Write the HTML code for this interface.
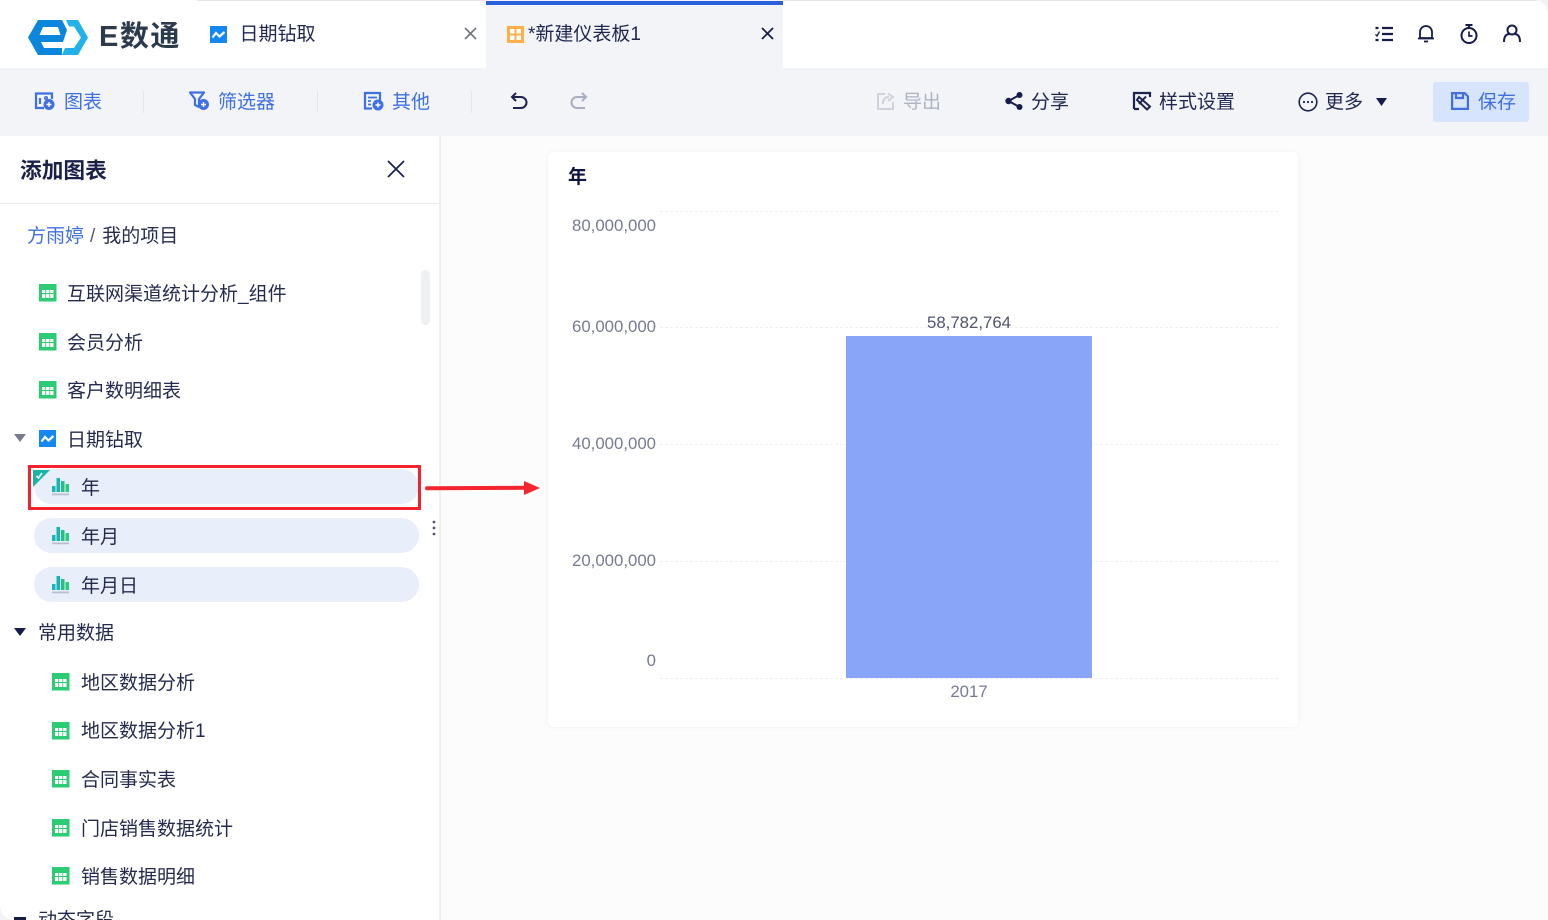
<!DOCTYPE html>
<html lang="zh"><head><meta charset="utf-8"><title>E数通</title>
<style>
html,body{margin:0;padding:0;width:1548px;height:920px;overflow:hidden;background:#f3f3f5}
body{font-family:"Liberation Sans","Noto Sans CJK SC",sans-serif;font-size:19px;color:#252b4e;position:relative}
.a{position:absolute}
.t{position:absolute;white-space:nowrap;line-height:26px;height:26px;margin-top:2px}
svg{position:absolute;overflow:visible}
.blue{color:#3f6fe3}
.pill{position:absolute;left:34px;width:385px;height:35px;border-radius:18px;background:#e8eefa}
.ax{position:absolute;white-space:nowrap;font-size:16.8px;line-height:20px;color:#777b92;text-align:right;width:100px;left:556px;margin-top:1px}
.grid{position:absolute;left:660px;width:618px;height:0;border-top:1px dashed #f0f0f3}
.div{position:absolute;top:91px;width:1px;height:22px;background:#e3e5ea}
</style></head><body>
<svg width="0" height="0" style="position:absolute"><defs>
<g id="tb"><rect x="0" y="0" width="17.500" height="17.500" fill="#2ecb75"/><g fill="#fff"><rect x="3" y="6" width="3.300" height="3"/><rect x="7.100" y="6" width="3.300" height="3"/><rect x="11.200" y="6" width="3.300" height="3"/><rect x="3" y="10" width="3.300" height="4"/><rect x="7.100" y="10" width="3.300" height="4"/><rect x="11.200" y="10" width="3.300" height="4"/></g></g>
<g id="ln"><rect width="17" height="17" fill="#1487f2"/><path d="M2.500 11.500l3.500-4.500 3.500 3.500 5-4.500" fill="none" stroke="#fff" stroke-width="2.200"/></g>
<g id="br"><rect x="0" y="8" width="3.500" height="6" fill="#18b5c0"/><rect x="4.500" y="0" width="3.500" height="14" fill="#18b5b0"/><rect x="9" y="3" width="3.500" height="11" fill="#22c08a"/><rect x="13.500" y="6" width="3.500" height="8" fill="#2ecb75"/><rect x="0" y="15.500" width="17" height="1.800" fill="#b9bfd2"/></g>
</defs></svg>

<!-- top bar -->
<div class="a" style="left:0;top:0;width:1548px;height:68px;background:#fff;border-radius:0 14px 0 0"></div>
<div class="a" style="left:197px;top:0;width:1340px;height:1px;background:#e6e7ea"></div>
<svg style="left:0;top:0" width="100" height="60">
<path fill-rule="evenodd" d="M38 20H62L67 30 63 42H41L44 48H62V55H38L28 37.500ZM43 27L39.500 35H60.500L58 27Z" fill="#0a86dc"/>
<path d="M66 20H78L88 37.500 78 55H62L65 48H74L81 37.500 74 26.500H69Z" fill="#22b2ea"/>
</svg>
<div class="t" style="left:99px;top:19px;height:36px;line-height:36px;font-size:29px;font-weight:700;color:#2c3a4e;letter-spacing:1.500px;margin-top:0">E数通</div>

<svg style="left:210px;top:26px" width="17" height="17"><use href="#ln"/></svg>
<div class="t" style="left:239.500px;top:20px;color:#1f2650">日期钻取</div>
<svg style="left:464px;top:27px" width="13" height="13"><path d="M1 1l11 11M12 1L1 12" stroke="#70747f" stroke-width="1.600"/></svg>

<div class="a" style="left:486px;top:0;width:297px;height:68px;background:#f2f4f8"></div>
<div class="a" style="left:486px;top:1px;width:297px;height:4px;background:#2a60de"></div>
<svg style="left:507px;top:26px" width="17" height="17"><rect width="17" height="17" fill="#fdb04a"/><rect x="3" y="3" width="4.500" height="11" fill="#fff"/><rect x="9.500" y="3" width="4.500" height="11" fill="#fff"/><rect x="3" y="7.500" width="11" height="2" fill="#fdb04a"/></svg>
<div class="t" style="left:528px;top:20px;color:#1f2650">*新建仪表板1</div>
<svg style="left:761px;top:27px" width="13" height="13"><path d="M1 1l11 11M12 1L1 12" stroke="#1a2048" stroke-width="1.800"/></svg>

<!-- right icons -->
<svg style="left:1375px;top:26px" width="18" height="17" fill="none" stroke="#161c48" stroke-width="2.200"><path d="M7 2h11M7 8h11M7 14h11"/><path d="M0.500 2h3M0.500 14h3"/><path d="M0.500 8.500l1.500 1.500L4.500 5.500" stroke-width="1.300"/></svg>
<svg style="left:1417px;top:24px" width="18" height="19" fill="none" stroke="#161c48" stroke-width="1.800"><path d="M3 14V8a6 6 0 0 1 12 0v6zM1 14.500h16"/><path d="M7 17.500h4"/></svg>
<svg style="left:1460px;top:24px" width="18" height="20" fill="none" stroke="#161c48" stroke-width="2"><circle cx="9" cy="11.500" r="7.500"/><path d="M5.500 1h7M9 1v3"/><path d="M9 7.500v4.500h3.500" stroke-width="1.700"/></svg>
<svg style="left:1503px;top:24px" width="18" height="18" fill="none" stroke="#161c48" stroke-width="2"><circle cx="9" cy="6" r="4.500"/><path d="M1 18q0-7.500 5-8M17 18q0-7.500-5-8"/></svg>

<!-- toolbar -->
<div class="a" style="left:0;top:68px;width:1548px;height:68px;background:#f2f4f8;box-shadow:0 1px 3px rgba(0,0,0,.05)"></div>
<svg style="left:35px;top:92px" width="20" height="18" fill="none" stroke="#3f6fe3" stroke-width="2.200"><path d="M9 16H1V1.500h16V7"/><path d="M5 6v6"/><circle cx="11" cy="6" r="1.300" stroke-width="1.500"/><circle cx="14" cy="12.500" r="5.500" fill="#3f6fe3" stroke="none"/><path d="M11.500 12.500h5M14 10v5" stroke="#fff" stroke-width="1.400"/></svg>
<div class="t blue" style="left:64px;top:88px">图表</div>
<div class="div" style="left:143px"></div>
<svg style="left:189px;top:91px" width="21" height="20" fill="none" stroke="#3f6fe3" stroke-width="2.200"><path d="M1 1.500h14L10 8v8L6 14V8z" stroke-linejoin="round"/><circle cx="14.500" cy="13.500" r="5.500" fill="#3f6fe3" stroke="none"/><path d="M12 13.500h5M14.500 11v5" stroke="#fff" stroke-width="1.400"/></svg>
<div class="t blue" style="left:218px;top:88px">筛选器</div>
<div class="div" style="left:317px"></div>
<svg style="left:364px;top:92px" width="20" height="18" fill="none" stroke="#3f6fe3" stroke-width="2.200"><path d="M8 16.500H1V1h15v7"/><path d="M4 5.500h9M4 9h3M4 12.500h3" stroke-width="1.800"/><circle cx="14" cy="13" r="5.500" fill="#3f6fe3" stroke="none"/><path d="M11.500 13h5M14 10.500v5" stroke="#fff" stroke-width="1.400"/></svg>
<div class="t blue" style="left:392px;top:88px">其他</div>
<div class="div" style="left:471px"></div>
<svg style="left:510px;top:92px" width="18" height="18" fill="none" stroke="#1d2450" stroke-width="2"><path d="M6 1L2 5l4 4"/><path d="M2 5h9a5.500 5.500 0 0 1 0 11H3"/></svg>
<svg style="left:570px;top:92px" width="18" height="18" fill="none" stroke="#a8adc0" stroke-width="2"><path d="M12 1l4 4-4 4"/><path d="M16 5H7a5.500 5.500 0 0 0 0 11h8"/></svg>

<svg style="left:877px;top:92px" width="18" height="18" fill="none" stroke="#cfd2dd" stroke-width="2"><path d="M8 2H1v15h15v-7"/><path d="M6 12q0-7 6-7M11 1.500L16 5l-5 4"/></svg>
<div class="t" style="left:903px;top:88px;color:#aeb2c2">导出</div>

<svg style="left:1005px;top:92px" width="18" height="18" fill="#161c48" stroke="#161c48"><circle cx="3.500" cy="9" r="3.200" stroke="none"/><circle cx="14.500" cy="3" r="3" stroke="none"/><circle cx="14.500" cy="15" r="3" stroke="none"/><path d="M3.500 9l11-6M3.500 9l11 6" stroke-width="2"/></svg>
<div class="t" style="left:1031px;top:88px;color:#1f2650">分享</div>
<svg style="left:1133px;top:92px" width="18" height="18" fill="none" stroke="#1d2450" stroke-width="2.200"><path d="M1 17V1h16v4M1 17h5"/><path d="M6 5l11 9.500-3 3L4 8z" stroke-width="2"/><path d="M13 4.500L6 12" stroke-width="2"/></svg>
<div class="t" style="left:1159px;top:88px;color:#1f2650">样式设置</div>
<svg style="left:1298px;top:92px" width="20" height="20"><circle cx="10" cy="10" r="8.800" fill="none" stroke="#1d2450" stroke-width="1.600"/><circle cx="6" cy="10" r="1.100" fill="#1d2450"/><circle cx="10" cy="10" r="1.100" fill="#1d2450"/><circle cx="14" cy="10" r="1.100" fill="#1d2450"/></svg>
<div class="t" style="left:1325px;top:88px;color:#1f2650">更多</div>
<svg style="left:1376px;top:98px" width="11" height="8"><path d="M0 0h11L5.500 8z" fill="#161c48"/></svg>
<div class="a" style="left:1433px;top:82px;width:96px;height:40px;background:#d6e4fd;border-radius:3px"></div>
<svg style="left:1451px;top:92px" width="18" height="18" fill="none" stroke="#3f6fe3" stroke-width="2.200"><path d="M1.100 1.100h12.500l3.300 3.300v12.500H1.100z"/><path d="M5 1.500v4.500h7V1.500"/></svg>
<div class="t blue" style="left:1478px;top:88px">保存</div>

<!-- main -->
<div class="a" style="left:440px;top:136px;width:1108px;height:784px;background:#fcfcfd"></div>
<div class="a" style="left:548px;top:152px;width:750px;height:575px;background:#fff;border-radius:6px;box-shadow:0 0 6px rgba(30,40,80,.05)"></div>
<div class="t" style="left:568px;top:163px;font-weight:700;color:#10163f">年</div>
<div class="grid" style="top:211px"></div>
<div class="grid" style="top:327px"></div>
<div class="grid" style="top:444px"></div>
<div class="grid" style="top:561px"></div>
<div class="grid" style="top:678px"></div>
<div class="ax" style="top:215px">80,000,000</div>
<div class="ax" style="top:316px">60,000,000</div>
<div class="ax" style="top:433px">40,000,000</div>
<div class="ax" style="top:550px">20,000,000</div>
<div class="ax" style="top:650px">0</div>
<div class="a" style="left:846px;top:336px;width:246px;height:342px;background:#88a5f8"></div>
<div class="a" style="left:869px;top:313px;width:200px;text-align:center;font-size:16.8px;line-height:20px;color:#50546e">58,782,764</div>
<div class="a" style="left:869px;top:682px;width:200px;text-align:center;font-size:16.8px;line-height:20px;color:#777b92">2017</div>

<!-- sidebar -->
<div class="a" style="left:0;top:136px;width:439px;height:784px;background:#fff;border-right:2px solid #eeeff3;border-radius:0 0 0 14px"></div>
<div class="t" style="left:20px;top:155px;height:28px;line-height:28px;font-size:21.700px;font-weight:700;color:#1a2048">添加图表</div>
<svg style="left:387px;top:160px" width="18" height="18"><path d="M1 1l16 16M17 1L1 17" stroke="#1d2450" stroke-width="1.800"/></svg>
<div class="a" style="left:0;top:203px;width:439px;height:1px;background:#e8e9ed"></div>
<div class="t" style="left:27px;top:222px"><span class="blue">方雨婷</span><span style="color:#555a72;margin:0 7px 0 6px">/</span><span>我的项目</span></div>
<div class="a" style="left:421px;top:270px;width:9px;height:55px;border-radius:5px;background:#eff0f4"></div>

<svg style="left:39px;top:284px" width="17" height="17"><use href="#tb"/></svg>
<div class="t" style="left:67px;top:280px">互联网渠道统计分析_组件</div>
<svg style="left:39px;top:333px" width="17" height="17"><use href="#tb"/></svg>
<div class="t" style="left:67px;top:329px">会员分析</div>
<svg style="left:39px;top:381px" width="17" height="17"><use href="#tb"/></svg>
<div class="t" style="left:67px;top:377px">客户数明细表</div>

<svg style="left:14px;top:434px" width="12" height="8"><path d="M0 0h12L6 8z" fill="#777b92"/></svg>
<svg style="left:39px;top:430px" width="17" height="17"><use href="#ln"/></svg>
<div class="t" style="left:67px;top:426px">日期钻取</div>

<div class="pill" style="top:469px"></div>
<div class="pill" style="top:518px"></div>
<div class="pill" style="top:567px"></div>
<svg style="left:33px;top:470px" width="17" height="17"><path d="M0 0h17L0 17z" fill="#17b5ab"/><path d="M3.500 6l2 2 3.500-5" fill="none" stroke="#fff" stroke-width="1.600"/></svg>
<svg style="left:52px;top:478px" width="17" height="18"><use href="#br"/></svg>
<div class="t" style="left:81px;top:474px">年</div>
<svg style="left:52px;top:527px" width="17" height="18"><use href="#br"/></svg>
<div class="t" style="left:81px;top:523px">年月</div>
<svg style="left:52px;top:576px" width="17" height="18"><use href="#br"/></svg>
<div class="t" style="left:81px;top:572px">年月日</div>
<div class="a" style="left:28px;top:465px;width:387px;height:39px;border:3px solid #f5222d"></div>
<svg style="left:425px;top:480px" width="116" height="16"><path d="M2 8.300L100 7.800" stroke="#f5252f" stroke-width="4" stroke-linecap="round"/><path d="M99 1l16 7-16 7z" fill="#f5252f"/></svg>
<svg style="left:432px;top:520px" width="4" height="16" fill="#53577a"><circle cx="2" cy="2" r="1.400"/><circle cx="2" cy="8" r="1.400"/><circle cx="2" cy="14" r="1.400"/></svg>

<svg style="left:14px;top:628px" width="12" height="8"><path d="M0 0h12L6 8z" fill="#161c48"/></svg>
<div class="t" style="left:38px;top:619px">常用数据</div>

<svg style="left:52px;top:673px" width="17" height="17"><use href="#tb"/></svg>
<div class="t" style="left:81px;top:669px">地区数据分析</div>
<svg style="left:52px;top:722px" width="17" height="17"><use href="#tb"/></svg>
<div class="t" style="left:81px;top:717px">地区数据分析1</div>
<svg style="left:52px;top:770px" width="17" height="17"><use href="#tb"/></svg>
<div class="t" style="left:81px;top:766px">合同事实表</div>
<svg style="left:52px;top:819px" width="17" height="17"><use href="#tb"/></svg>
<div class="t" style="left:81px;top:815px">门店销售数据统计</div>
<svg style="left:52px;top:867px" width="17" height="17"><use href="#tb"/></svg>
<div class="t" style="left:81px;top:863px">销售数据明细</div>
<svg style="left:14px;top:917px" width="12" height="3"><rect width="12" height="3" fill="#161c48"/></svg>
<div class="t" style="left:38px;top:906px">动态字段</div>
</body></html>
